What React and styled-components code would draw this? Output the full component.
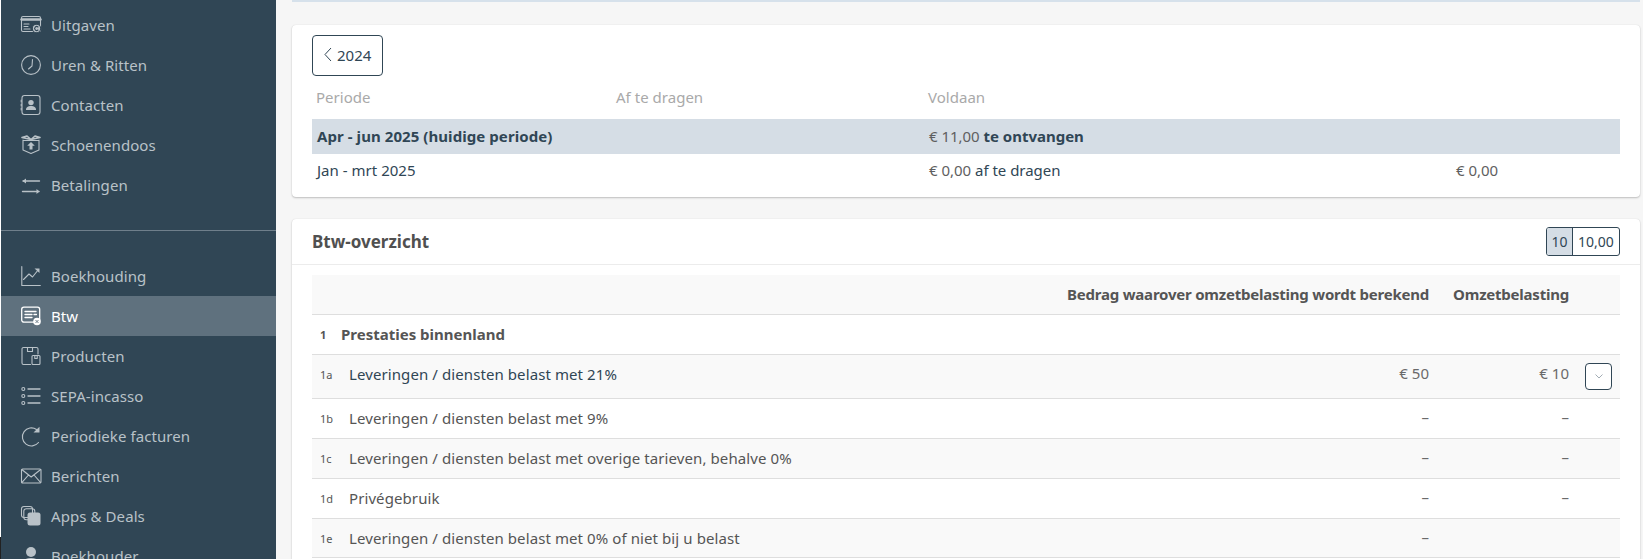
import React from "react";
import styled, { createGlobalStyle } from "styled-components";

const Global = createGlobalStyle`
  html, body { margin: 0; padding: 0; height: 559px; overflow: hidden; background: #f6f6f6; }
  body { font-family: "Noto Sans", "Liberation Sans", sans-serif; font-size: 15px; color: #4a4a4a; }
  * { box-sizing: border-box; }
`;

const Page = styled.div`display: flex; height: 559px; overflow: hidden;`;
const Rail = styled.div`width: 1px; flex: none; display: flex; flex-direction: column;`;
const RailLight = styled.div`flex: 1; background: #fff;`;
const RailDark = styled.div`height: 22px; background: #222;`;

const Sidebar = styled.nav`
  width: 275px; flex: none; height: 559px; overflow: hidden;
  background: #304655; padding-top: 5px;
`;
const NavItem = styled.div`
  height: 40px; display: flex; align-items: center; gap: 10px; padding-left: 20px;
  color: ${p => (p.$active ? "#fff" : "#b9c2c8")};
  background: ${p => (p.$active ? "#5f717e" : "transparent")};
  font-size: 15px; letter-spacing: 0.08px;
  svg { width: 20px; height: 20px; flex: none; overflow: visible; }
`;
const NavRule = styled.hr`
  margin: 25px 0 25px; border: 0; height: 1px; background: #6f7f8b;
`;

const Main = styled.main`
  flex: 1; min-width: 0; padding: 0 3px 0 16px; display: flex; flex-direction: column;
`;
const TopEdge = styled.div`height: 2px; flex: none; background: #d6e1eb; margin-bottom: 23px;`;
const Card = styled.section`
  flex: none; background: #fff; border-radius: 4px;
  box-shadow: 0 0 1px rgba(0,0,0,.12), 0 1px 2px rgba(0,0,0,.22);
`;
const PeriodCard = styled(Card)`padding: 10px 20px 9px; margin-bottom: 22px; height: 172px;`;
const BackButton = styled.button`
  display: flex; align-items: center; gap: 5px; width: 71px; height: 41px; padding: 0 0 2px 11px;
  border: 1px solid #304655; border-radius: 4px; background: #fff; color: #304655;
  font: inherit; font-size: 15px;
  svg { width: 8px; height: 15px; flex: none; }
`;
const PeriodGrid = styled.div`
  display: grid; grid-template-columns: 300px 312px 527px 1fr; align-items: center;
  height: ${p => p.$h}px; padding: 0 0 2px ${p => p.$pad}px;
  background: ${p => (p.$hl ? "#d5dde5" : "transparent")};
  color: ${p => (p.$muted ? "#a9a9a9" : "#304655")};
  font-weight: ${p => (p.$bold ? 700 : 400)};
  letter-spacing: ${p => (p.$bold ? "0.07px" : "0.02px")};
`;
const Amount = styled.span`
  color: #5f5f5f; font-weight: 400; letter-spacing: -0.02px;
  b { color: #304655; font-weight: ${p => p.$strong ? 700 : 400}; }
`;

const TaxCard = styled(Card)`height: 400px; border-radius: 4px 4px 0 0;`;
const CardHead = styled.header`
  height: 46px; padding: 0 20px; display: flex; align-items: center; justify-content: space-between;
  border-bottom: 1px solid #ececec;
`;
const CardTitle = styled.h2`margin: 0; font-size: 17px; font-weight: 700; color: #505050;`;
const Toggle = styled.div`
  display: flex; height: 29px; width: 74px; border: 1px solid #304655; border-radius: 3px; overflow: hidden;
  font-size: 14px; color: #304655; background: #fff;
`;
const ToggleSeg = styled.span`
  display: flex; align-items: center; justify-content: center;
  ${p => p.$on ? "width: 26px; background: #d5dde5; border-right: 1px solid #304655;" : "flex: 1;"}
`;
const Table = styled.div`margin: 10px 20px 0;`;
const Row = styled.div`
  display: grid; grid-template-columns: 1fr 500px 140px 51px; align-items: start;
  height: ${p => p.$h}px; border-bottom: 1px solid #dedede;
  line-height: ${p => (p.$head ? 38 : 36)}px;
  background: ${p => (p.$shade ? "#f9f9f9" : "#fff")};
`;
const Label = styled.div`
  display: flex; align-items: center; padding-left: 8px; white-space: nowrap;
  color: ${p => p.$color || "#555"};
  font-weight: ${p => (p.$section ? 700 : 400)};
  letter-spacing: ${p => (p.$section ? "0" : "0.09px")};
`;
const Num = styled.span`
  flex: none; width: ${p => (p.$section ? 21 : 29)}px; font-size: 11px; letter-spacing: 0; color: #555; padding-top: 2px;
`;
const HeadCell = styled.div`text-align: right; font-weight: 700; color: #555; white-space: nowrap; letter-spacing: -0.22px;`;
const Value = styled.div`text-align: right; color: #6a6a6a;`;
const ActionCell = styled.div`display: flex; justify-content: flex-end; padding: 8px 8px 0 0;`;
const ChevronButton = styled.button`
  width: 27px; height: 27px; padding: 0; display: flex; align-items: center; justify-content: center;
  border: 1px solid #304655; border-radius: 4px; background: #fff;
  svg { width: 8px; height: 5px; }
`;

const S = { fill: "none", stroke: "currentColor", strokeWidth: 1.1, strokeLinecap: "round", strokeLinejoin: "round" };
const icons = {
  receipt: <g {...S}><rect x="0.5" y="1.5" width="19" height="15" rx="1.5"/><path d="M.5 4.5h19" strokeWidth="2.4"/><path d="M3 9h5M3 11.5h4M3 14h6"/><circle cx="15.5" cy="13.5" r="4.2" fill="currentColor" stroke="#304655"/><path d="M17 12a2 2 0 1 0 0 3" stroke="#304655"/></g>,
  clock: <g {...S}><circle cx="10" cy="10" r="9.4"/><path d="M11.5 4.5 11 11l-3.5 3" /></g>,
  contact: <g {...S}><rect x="1" y="0.5" width="18" height="19" rx="2.5"/><path d="M.2 5v2M.2 9v2M.2 13v2"/><circle cx="10" cy="7.6" r="2.7" fill="currentColor" stroke="none"/><path d="M5 15c0-3 2-4 5-4s5 1 5 4z" fill="currentColor" stroke="none"/></g>,
  box: <g {...S}><path d="M2 5v10l8 3.5 8-3.5V5M2 5.5h16"/><path d="M1 2.5 6 1l4 3.5M19 2.5 14 1l-4 3.5M1 2.5l9 2 9-2" strokeWidth="1.6"/><path d="M10 7l-3.8 3.8h2.3v3.8h3v-3.8h2.3z" fill="currentColor" stroke="none"/></g>,
  transfer: <g {...S} strokeWidth="1.4"><path d="M18.5 6H2"/><path d="M1.500 16.500H18"/><path d="M15.500 14l3 2.500-3 2.500" fill="currentColor" stroke="none"/><path d="M5 3.500 1.500 6 5 8.500" fill="currentColor" stroke="none"/></g>,
  chart: <g {...S}><path d="M.8.5v19h18.500"/><path d="M2.500 13.500 8 8l3.500 3L17.500 3.500"/><path d="M13.500 2.500h5v4.500" fill="currentColor" stroke="none"/></g>,
  btw: <g {...S} strokeWidth="1.3"><rect x="0.7" y="1.2" width="18" height="15" rx="2.2"/><path d="M4 5.500h11M4 8.500h7M13 8.500h2.500M4 11.500h7"/><circle cx="16" cy="15.500" r="3.800" fill="#fff" stroke="none"/><path d="M14.800 14.300l2.400 2.400M17.200 14.300l-2.400 2.400" stroke="#5f717e" strokeWidth="0.9"/></g>,
  product: <g {...S}><path d="M9.500 18.500H2.500a1.500 1.500 0 0 1-1.500-1.500V3A1.500 1.500 0 0 1 2.500 1.500h13A1.500 1.500 0 0 1 17 3v5"/><path d="M6.500 1.500v4h5v-4"/><rect x="11" y="9.500" width="8" height="9" rx="1"/><path d="M13.800 9.500v3h2.400v-3"/></g>,
  list: <g {...S}><circle cx="2.300" cy="3" r="1.500"/><circle cx="2.300" cy="10" r="1.500"/><circle cx="2.300" cy="17" r="1.500"/><path d="M7 3h12M7 10h12M7 17h12" strokeWidth="1.3"/></g>,
  repeat: <g {...S}><path d="M17.500 16.500A9 9 0 1 1 15.500 3.500"/><path d="M18.500 0.800v5.700h-6z" fill="currentColor" stroke="none"/></g>,
  mail: <g {...S}><rect x="0.500" y="3" width="19.500" height="14" rx="1.200"/><path d="M.8 3.500 10.200 11 19.700 3.500M.8 16.700 7.500 9M19.700 16.700 13 9"/></g>,
  apps: <g {...S}><rect x="0.500" y="0.500" width="11" height="11" rx="2.500"/><rect x="2.800" y="2.800" width="11" height="11" rx="2.500"/><rect x="6.500" y="6.500" width="13" height="13" rx="2.500" fill="currentColor" stroke="none"/></g>,
  person: <g fill="currentColor"><circle cx="10" cy="6" r="5"/><path d="M1 19c0-5 4-7 9-7s9 2 9 7z"/></g>,
};

const Icon = ({ name }) => <svg viewBox="0 0 20 20">{icons[name]}</svg>;

const topNav = [["receipt", "Uitgaven"], ["clock", "Uren & Ritten"], ["contact", "Contacten"], ["box", "Schoenendoos"], ["transfer", "Betalingen"]];
const lowerNav = [["chart", "Boekhouding"], ["btw", "Btw", true], ["product", "Producten"], ["list", "SEPA-incasso"], ["repeat", "Periodieke facturen"], ["mail", "Berichten"], ["apps", "Apps & Deals"], ["person", "Boekhouder"]];

const rows = [
  { n: "1a", label: "Leveringen / diensten belast met 21%", a: "€ 50", b: "€ 10", h: 44, shade: true, color: "#304655", action: true },
  { n: "1b", label: "Leveringen / diensten belast met 9%", a: "–", b: "–", h: 40 },
  { n: "1c", label: "Leveringen / diensten belast met overige tarieven, behalve 0%", a: "–", b: "–", h: 40, shade: true },
  { n: "1d", label: "Privégebruik", a: "–", b: "–", h: 40 },
  { n: "1e", label: "Leveringen / diensten belast met 0% of niet bij u belast", a: "–", b: "", h: 39, shade: true },
];

export default function App() {
  return (
    <>
      <Global />
      <Page>
        <Rail><RailLight /><RailDark /></Rail>
        <Sidebar>
          {topNav.map(([i, t]) => <NavItem key={t}><Icon name={i} />{t}</NavItem>)}
          <NavRule />
          {lowerNav.map(([i, t, a]) => <NavItem key={t} $active={a}><Icon name={i} />{t}</NavItem>)}
        </Sidebar>
        <Main>
          <TopEdge />
          <PeriodCard>
            <BackButton>
              <svg viewBox="0 0 8 15" fill="none" stroke="#304655" strokeWidth="1"><path d="M7 1 1 7.500 7 14" /></svg>
              2024
            </BackButton>
            <PeriodGrid $h={43} $pad={4} $muted>
              <span>Periode</span><span>Af te dragen</span><span>Voldaan</span><span />
            </PeriodGrid>
            <PeriodGrid $h={35} $pad={5} $hl $bold>
              <span>Apr - jun 2025 (huidige periode)</span><span />
              <Amount $strong>€ 11,00 <b>te ontvangen</b></Amount><span />
            </PeriodGrid>
            <PeriodGrid $h={34} $pad={5}>
              <span>Jan - mrt 2025</span><span />
              <Amount>€ 0,00 <b>af te dragen</b></Amount>
              <Amount>€ 0,00</Amount>
            </PeriodGrid>
          </PeriodCard>
          <TaxCard>
            <CardHead>
              <CardTitle>Btw-overzicht</CardTitle>
              <Toggle><ToggleSeg $on>10</ToggleSeg><ToggleSeg>10,00</ToggleSeg></Toggle>
            </CardHead>
            <Table>
              <Row $h={40} $shade $head>
                <span />
                <HeadCell>Bedrag waarover omzetbelasting wordt berekend</HeadCell>
                <HeadCell>Omzetbelasting</HeadCell>
                <span />
              </Row>
              <Row $h={40}>
                <Label $section><Num $section>1</Num>Prestaties binnenland</Label>
              </Row>
              {rows.map(r => (
                <Row key={r.n} $h={r.h} $shade={r.shade}>
                  <Label $color={r.color}><Num>{r.n}</Num>{r.label}</Label>
                  <Value>{r.a}</Value>
                  <Value>{r.b}</Value>
                  <ActionCell>
                    {r.action && (
                      <ChevronButton aria-label="Uitklappen">
                        <svg viewBox="0 0 8 5" fill="none" stroke="#8a97a1" strokeWidth="0.8"><path d="M.5.500 4 4 7.500.500" /></svg>
                      </ChevronButton>
                    )}
                  </ActionCell>
                </Row>
              ))}
            </Table>
          </TaxCard>
        </Main>
      </Page>
    </>
  );
}
